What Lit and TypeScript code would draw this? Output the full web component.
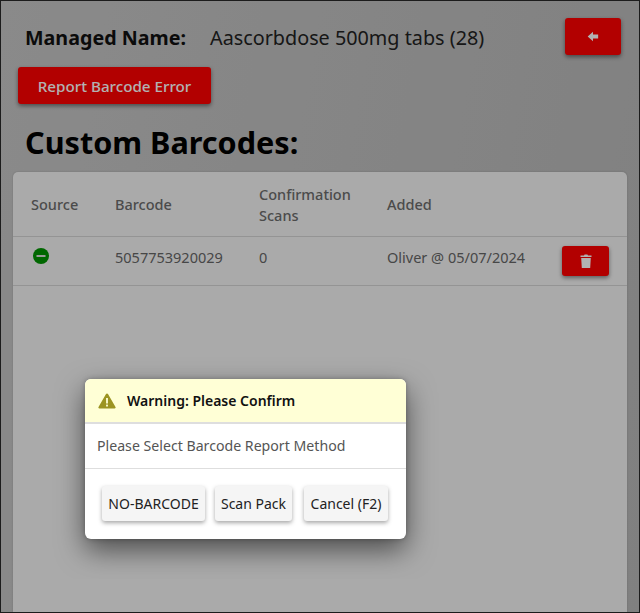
import { LitElement, html, css } from "lit";
import { customElement } from "lit/decorators.js";

@customElement("app-root")
export class AppRoot extends LitElement {
  static styles = css`
    :host { display: block; width: 640px; height: 613px; font-family: "Noto Sans", "Open Sans", sans-serif; }
    * { box-sizing: border-box; }
    .frame { position: relative; width: 640px; height: 613px; border: 1px solid #1c1c1c; overflow: hidden; background: linear-gradient(100deg, #c6c6c6, #b8b8b8); display: flex; flex-direction: column; padding: 17px 12px 0 12px; color: #111; }
    .top { display: flex; align-items: flex-start; padding-left: 12px; height: 49px; }
    .label { font-size: 19.7px; font-weight: 700; line-height: 40px; color: #111; width: 185px; white-space: nowrap; }
    .name { font-size: 19.8px; line-height: 40px; color: #222; flex: 1; white-space: nowrap; }
    button { font-family: inherit; border: none; }
    .red { background: #ff0000; color: #fff; border-radius: 3px; box-shadow: 0 2px 4px rgba(0,0,0,.45); display: flex; align-items: center; justify-content: center; }
    .back { width: 56px; height: 37px; margin-right: 6px; }
    .report { width: 193px; height: 37px; margin-left: 5px; font-size: 15.2px; font-weight: 500; }
    h1 { margin: 17px 0 0 12px; font-size: 30.6px; line-height: 43px; font-weight: 700; color: #000; }
    .card { margin-top: 8px; flex: 1; background: #f4f4f4; border-radius: 5px 5px 0 0; width: 614px; box-shadow: 0 0 2px rgba(0,0,0,.2); }
    .row { display: grid; grid-template-columns: 84px 144px 128px 1fr 66px; align-items: center; font-size: 14.5px; padding-left: 18px; border-bottom: 1px solid #d4d4d4; color: #666; }
    .head { height: 65px; font-weight: 500; line-height: 21px; color: #6c6c6c; padding-top: 1px; }
    .body { height: 49px; color: #666; }
    .cell { padding-bottom: 9px; }
    .dot { display: block; width: 16px; height: 16px; margin: 0 0 11px 2px; }
    .del { width: 47px; height: 30px; margin-left: 1px; }
    .overlay { position: absolute; inset: 0; background: rgba(0,0,0,.3); }
    .clip { position: absolute; left: 40px; top: 300px; width: 400px; height: 278px; overflow: hidden; }
    .modal { position: absolute; left: 44px; top: 78px; width: 321px; height: 160px; background: #fff; border-radius: 6px; box-shadow: 0 11px 28px rgba(0,0,0,.55), 0 0 5px rgba(0,0,0,.25); overflow: hidden; display: flex; flex-direction: column; }
    .mh { height: 45px; background: #ffffd6; border-bottom: 2px solid #dedede; display: flex; align-items: center; gap: 11px; padding: 0 0 0 13px; font-size: 14px; font-weight: 600; color: #111; }
    .mb { height: 45px; border-bottom: 1px solid #dedede; display: flex; align-items: center; padding: 0 0 2px 12px; font-size: 14.15px; color: #555; }
    .mf { flex: 1; display: flex; padding: 17px 0 0 17px; }
    .mf button { height: 35px; background: #f5f5f5; border-radius: 3px; font-size: 14px; color: #222; box-shadow: 0 2px 4px rgba(0,0,0,.35); padding: 0; }
    .b1 { width: 103px; margin-right: 10px; }
    .b2 { width: 77px; margin-right: 12px; }
    .b3 { width: 84px; }
  `;

  render() {
    return html`
      <div class="frame">
        <div class="top">
          <div class="label">Managed Name:</div>
          <div class="name">Aascorbdose 500mg tabs (28)</div>
          <button class="red back" aria-label="Back">
            <svg width="12" height="11" viewBox="0 0 14 12"><path d="M7 0.5 L0.8 6 L7 11.5 V8.4 H13 V3.6 H7 Z" fill="#fff"/></svg>
          </button>
        </div>
        <button class="red report">Report Barcode Error</button>
        <h1>Custom Barcodes:</h1>
        <div class="card">
          <div class="row head">
            <div>Source</div><div>Barcode</div><div>Confirmation<br />Scans</div><div>Added</div><div></div>
          </div>
          <div class="row body">
            <div>
              <svg class="dot" viewBox="0 0 16 16"><circle cx="8" cy="8" r="8" fill="#009400"/><rect x="3.5" y="7" width="9" height="2" fill="#ddd"/></svg>
            </div>
            <div class="cell">5057753920029</div>
            <div class="cell">0</div>
            <div class="cell">Oliver @ 05/07/2024</div>
            <div>
              <button class="red del" aria-label="Delete">
                <svg width="12" height="14" viewBox="0 0 12 14"><path d="M0.5 1.5 H4 L4.6 0.5 H7.4 L8 1.5 H11.5 V3 H0.5 Z M1.2 4 H10.8 L10.2 14 H1.8 Z" fill="#fff"/></svg>
              </button>
            </div>
          </div>
        </div>
        <div class="overlay"></div>
        <div class="clip">
          <div class="modal">
            <div class="mh">
              <svg width="18" height="16" viewBox="0 0 18 16"><path d="M9 0.5 a1.2 1.2 0 0 1 1 .6 L17.5 14 a1 1 0 0 1 -.9 1.5 H1.4 a1 1 0 0 1 -.9 -1.5 L8 1.1 a1.2 1.2 0 0 1 1 -.6 Z" fill="#9c9422"/><rect x="8.1" y="5" width="1.8" height="5.5" fill="#ffffd6"/><rect x="8.1" y="11.6" width="1.8" height="1.9" fill="#ffffd6"/></svg>
              <span>Warning: Please Confirm</span>
            </div>
            <div class="mb">Please Select Barcode Report Method</div>
            <div class="mf">
              <button class="b1">NO-BARCODE</button>
              <button class="b2">Scan Pack</button>
              <button class="b3">Cancel (F2)</button>
            </div>
          </div>
        </div>
      </div>
    `;
  }
}
